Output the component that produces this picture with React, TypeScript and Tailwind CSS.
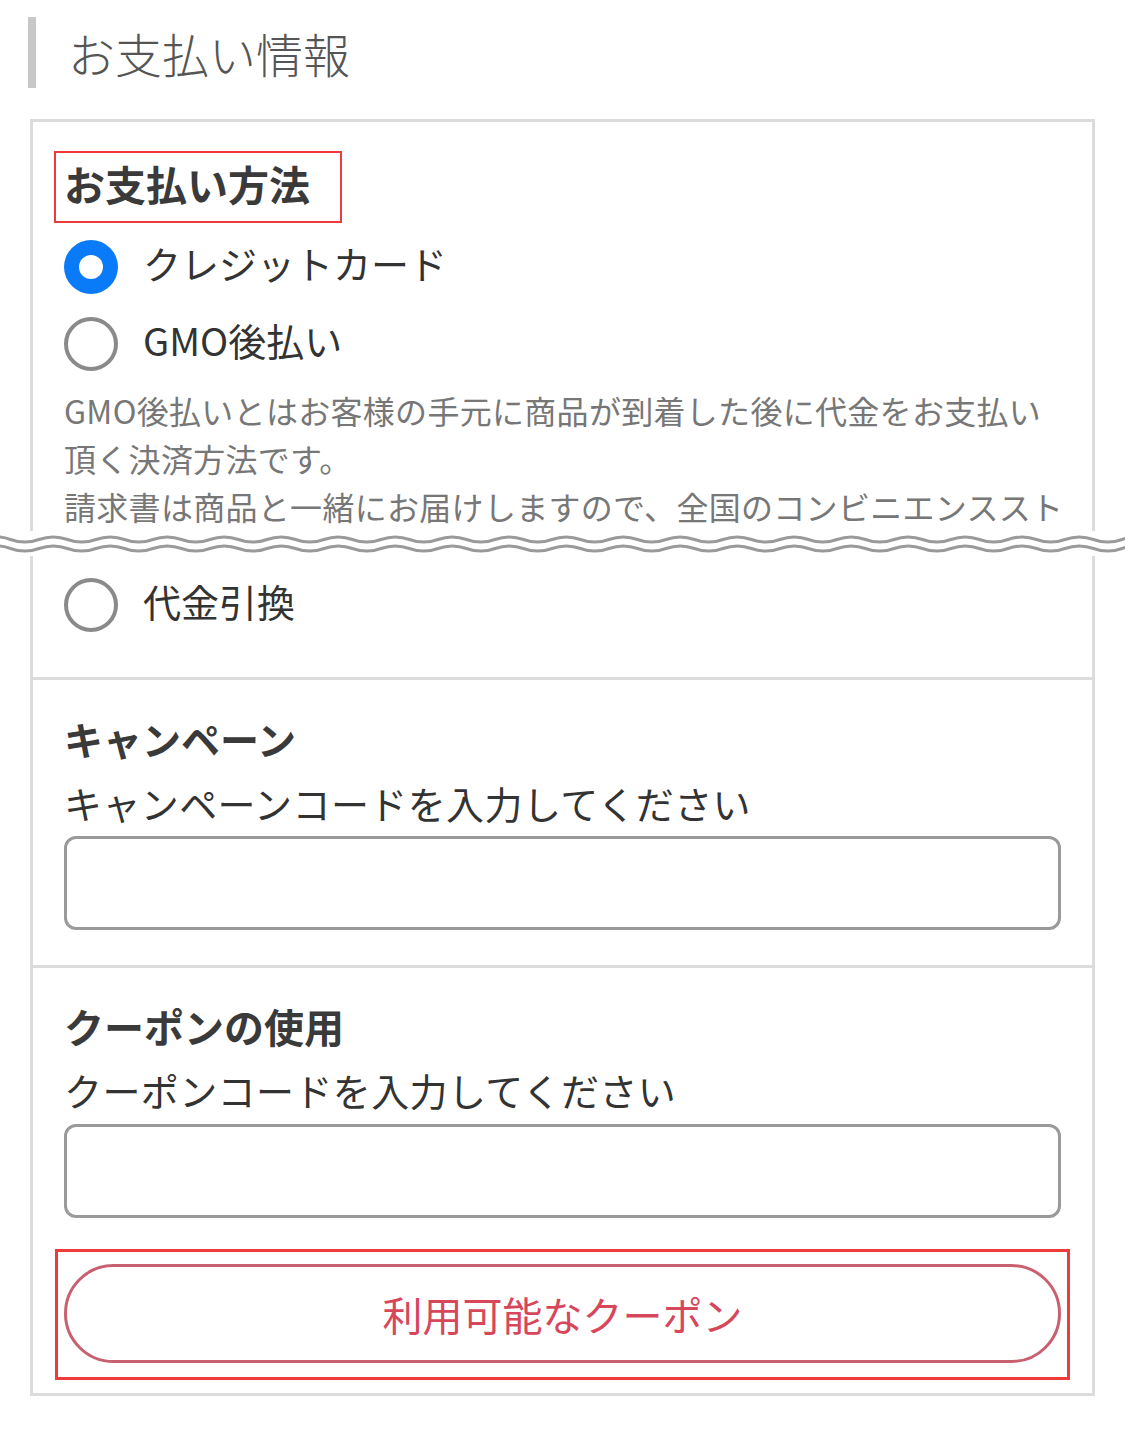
import React from "react";

const FONT = { fontFamily: '"Noto Sans CJK JP", "Noto Sans", sans-serif' };

function Wave() {
  const period = 57;
  const w = 1125;
  const build = (cy: number, amp: number) => {
    let d = `M ${-period} ${cy}`;
    for (let x = -period; x < w + period; x += period) {
      d += ` q ${period / 4} ${-amp * 2} ${period / 2} 0 t ${period / 2} 0`;
    }
    return d;
  };
  return (
    <svg width="1125" height="25" viewBox="0 0 1125 25" className="block bg-white">
      <g transform="translate(-18 0)">
        <path d={build(8.5, 2.6)} fill="none" stroke="#9a9a9a" strokeWidth="3" />
        <path d={build(17.5, 2.6)} fill="none" stroke="#9a9a9a" strokeWidth="3" />
      </g>
    </svg>
  );
}

function Radio({ checked }: { checked?: boolean }) {
  if (checked) {
    return (
      <span className="flex h-[54px] w-[54px] shrink-0 items-center justify-center rounded-full bg-[#0a7bf8]">
        <span className="h-[24px] w-[24px] rounded-full bg-white" />
      </span>
    );
  }
  return <span className="h-[54px] w-[54px] shrink-0 rounded-full border-[4px] border-[#8a8a8a] bg-white" />;
}

function RadioRow({ label, checked }: { label: string; checked?: boolean }) {
  return (
    <div className="flex h-[77px] items-center gap-[25px]">
      <Radio checked={checked} />
      <span className="-mt-[7px] text-[38px] leading-none text-[#333]">{label}</span>
    </div>
  );
}

export default function App() {
  return (
    <div className="min-h-[1440px] w-[1125px] bg-white" style={FONT}>
      {/* Header */}
      <div className="pt-[17px]">
        <div className="ml-[28px] flex h-[71px] items-center">
          <div className="h-full w-[8px] bg-[#c8c8c8]" />
          <h1 className="ml-[32px] -mt-[1px] text-[47px] font-light leading-none text-[#555]">お支払い情報</h1>
        </div>
      </div>

      {/* Card top part (clipped) */}
      <div className="mx-[30px] mt-[31px] h-[412px] overflow-hidden border-x-[3px] border-t-[3px] border-[#dcdcdc] px-[31px]">
        <div className="-ml-[10px] mt-[29px] inline-flex h-[72px] w-[288px] items-center border-2 border-[#ee3a3a] pl-[8px]">
          <span className="-mt-[8px] text-[41px] font-bold leading-none text-[#3a3a3a]">お支払い方法</span>
        </div>
        <div className="mt-[5px]">
          <RadioRow label="クレジットカード" checked />
          <RadioRow label="GMO後払い" />
        </div>
        <div className="mt-[4px] text-[32px] leading-[48px] tracking-[0.3px] text-[#777]">
          <div className="whitespace-nowrap">GMO後払いとはお客様の手元に商品が到着した後に代金をお支払い</div>
          <div className="whitespace-nowrap">頂く決済方法です。</div>
          <div className="whitespace-nowrap">請求書は商品と一緒にお届けしますので、全国のコンビニエンススト</div>
        </div>
      </div>

      <Wave />

      {/* Card bottom part */}
      <div className="mx-[30px] border-x-[3px] border-b-[3px] border-[#dcdcdc]">
        <div className="px-[31px] pb-[34px] pt-[10px]">
          <RadioRow label="代金引換" />
        </div>

        <div className="border-t-[3px] border-[#dcdcdc] px-[31px] pb-[35px] pt-[34px]">
          <div className="text-[39px] font-bold leading-[48px] text-[#3a3a3a]">キャンペーン</div>
          <div className="mt-[17px] text-[38px] leading-[48px] tracking-[0.4px] text-[#333]">キャンペーンコードを入力してください</div>
          <input
            type="text"
            className="mt-[9px] block h-[94px] w-full rounded-[12px] border-[3px] border-[#9a9a9a] bg-white outline-none"
          />
        </div>

        <div className="border-t-[3px] border-[#dcdcdc] px-[31px] pb-[13px] pt-[34px]">
          <div className="text-[40px] font-bold leading-[48px] text-[#3a3a3a]">クーポンの使用</div>
          <div className="mt-[16px] text-[38px] leading-[48px] tracking-[0.4px] text-[#333]">クーポンコードを入力してください</div>
          <input
            type="text"
            className="mt-[10px] block h-[94px] w-full rounded-[12px] border-[3px] border-[#9a9a9a] bg-white outline-none"
          />
          <div className="-mx-[9px] mt-[31px] border-[3px] border-[#ee3a3a] px-[6px] pb-[14px] pt-[12px]">
            <button
              type="button"
              className="flex h-[99px] w-full items-center justify-center rounded-full border-[3px] border-[#c9606f] bg-white text-[40px] leading-none text-[#d7475c]"
              style={FONT}
            >
              利用可能なクーポン
            </button>
          </div>
        </div>
      </div>
    </div>
  );
}
